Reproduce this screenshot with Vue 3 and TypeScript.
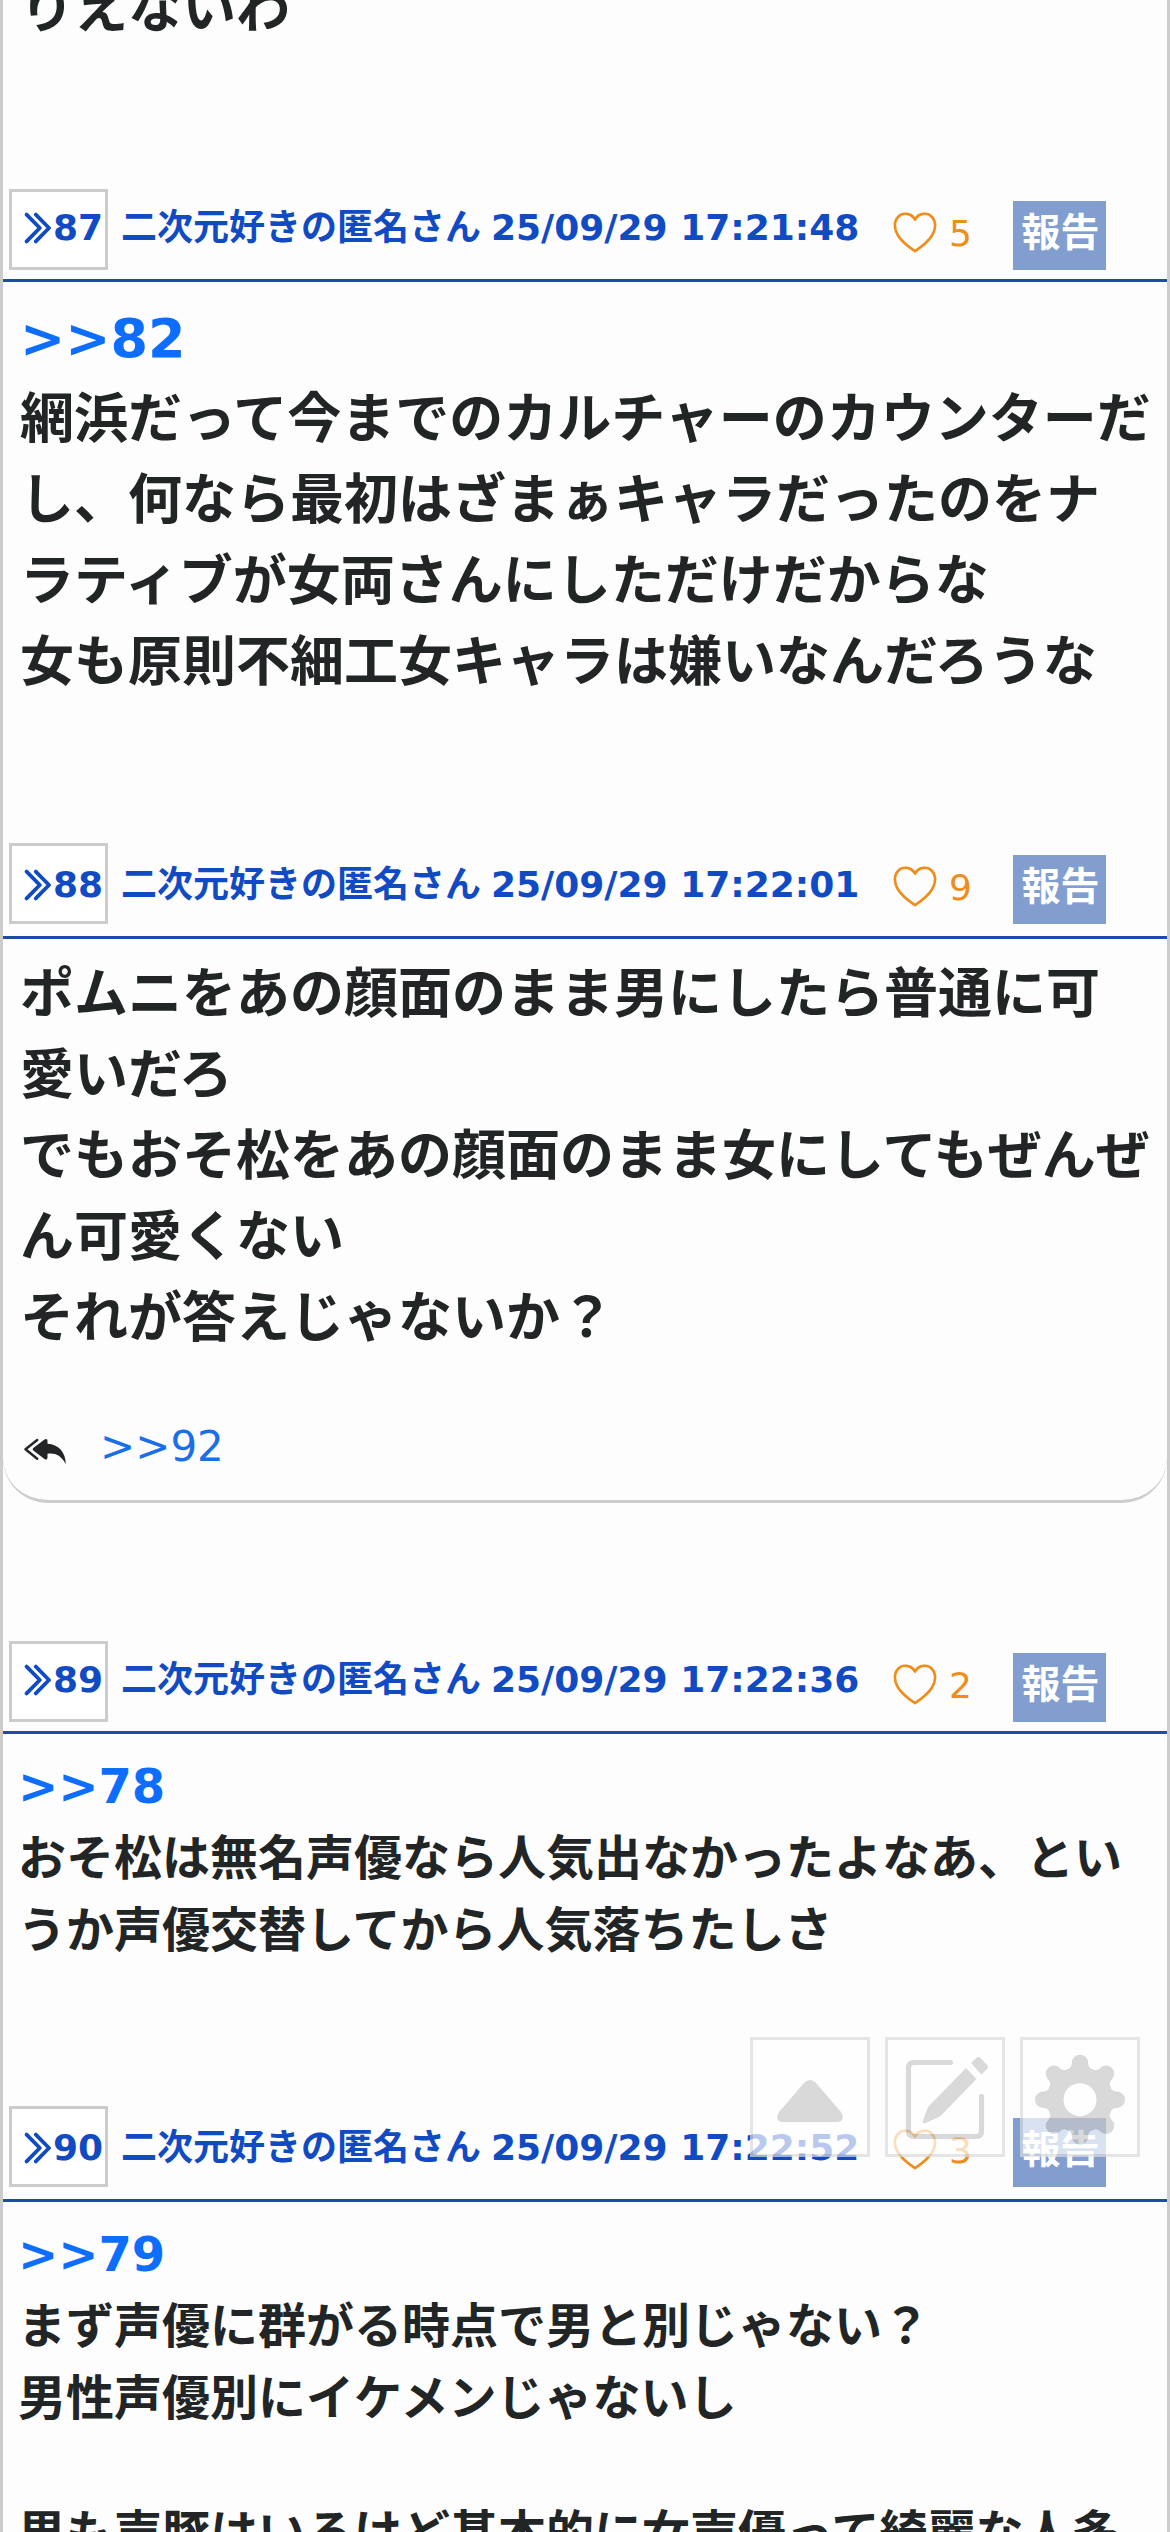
<script setup lang="ts">
interface Post {
  id: number
  time: string
  likes: number
  anchor?: string
  lines: string[]
  size: 'large' | 'medium'
  low: boolean
  replies?: string
}

const posts: Post[] = [
  {
    id: 87,
    time: '25/09/29 17:21:48',
    likes: 5,
    anchor: '>>82',
    lines: [
      '網浜だって今までのカルチャーのカウンターだ',
      'し、何なら最初はざまぁキャラだったのをナ',
      'ラティブが女両さんにしただけだからな',
      '女も原則不細工女キャラは嫌いなんだろうな',
    ],
    size: 'large',
    low: false,
  },
  {
    id: 88,
    time: '25/09/29 17:22:01',
    likes: 9,
    lines: [
      'ポムニをあの顔面のまま男にしたら普通に可',
      '愛いだろ',
      'でもおそ松をあの顔面のまま女にしてもぜんぜ',
      'ん可愛くない',
      'それが答えじゃないか？',
    ],
    size: 'large',
    low: true,
    replies: '>>92',
  },
  {
    id: 89,
    time: '25/09/29 17:22:36',
    likes: 2,
    anchor: '>>78',
    lines: ['おそ松は無名声優なら人気出なかったよなあ、とい', 'うか声優交替してから人気落ちたしさ'],
    size: 'medium',
    low: false,
  },
  {
    id: 90,
    time: '25/09/29 17:22:52',
    likes: 3,
    anchor: '>>79',
    lines: ['まず声優に群がる時点で男と別じゃない？', '男性声優別にイケメンじゃないし', '', '男も声豚はいるけど基本的に女声優って綺麗な人多'],
    size: 'medium',
    low: true,
  },
]
</script>

<template>
  <main class="thread">
    <div class="tail large"><p class="line">りえないわ</p></div>

    <article v-for="post in posts" :key="post.id" class="post" :class="[post.size, { low: post.low, replied: post.replies }]">
      <header class="head">
        <a class="num">
          <svg class="chev" viewBox="0 0 29 32" fill="none" stroke="currentColor" stroke-width="3.8" stroke-linecap="round" stroke-linejoin="round">
            <path d="M2.600 2.600 15.800 16 2.600 29.400M11.800 2.600 25 16 11.800 29.400" />
          </svg>
          <span>{{ post.id }}</span>
        </a>
        <div class="name"><span>二次元好きの匿名さん</span><time>{{ post.time }}</time></div>
        <svg class="heart" viewBox="0 0 44 42" fill="none" stroke="currentColor" stroke-width="2.600" stroke-linejoin="round">
          <path d="M22 7.700C18.500 .8 9.500 .2 5.500 4.500C.5 9.500 1 17 5 23.500C9 30 15 34.500 22 39.200C29 34.500 35 30 39 23.500C43 17 43.500 9.500 38.500 4.500C34.500 .2 25.500 .8 22 7.700Z" />
        </svg>
        <span class="likes">{{ post.likes }}</span>
        <button class="report" type="button">報告</button>
      </header>
      <div class="body">
        <p v-if="post.anchor" class="line"><a class="anchor">{{ post.anchor }}</a></p>
        <p v-for="(text, i) in post.lines" :key="i" class="line" :class="{ blank: !text }">{{ text }}</p>
      </div>
      <footer v-if="post.replies" class="replies">
        <svg class="reply-icon" viewBox="0 0 42 30">
          <path d="M13.200 2 1.500 11.300 13.200 20.800" fill="none" stroke="currentColor" stroke-width="2.400" stroke-linecap="round" stroke-linejoin="round" />
          <path d="M9.300 10Q7.800 11.300 9.300 12.600L20.500 21Q23.500 22.500 23.500 19.500V15.800C31 14.800 36.500 17 41.800 26C41.500 14 34.500 6.500 23.500 5.800V3Q23.500 0 20.500 1.500Z" fill="currentColor" />
        </svg>
        <a>{{ post.replies }}</a>
      </footer>
    </article>

    <nav class="tools">
      <button type="button" class="tool">
        <svg viewBox="0 0 120 120"><path d="M54.500 45.500Q60 40.500 65.500 45.500L91 75Q96 84 87 85H33Q24 84 29 75Z" fill="currentColor" /></svg>
      </button>
      <button type="button" class="tool">
        <svg viewBox="0 0 120 120">
          <path d="M65.500 25.500H29Q23.500 25.500 23.500 31V94Q23.500 99.500 29 99.500H91Q96.500 99.500 96.500 94V59.500" fill="none" stroke="currentColor" stroke-width="5.200" stroke-linecap="round" />
          <path d="M81 31 91.500 42 55 79.500 40.500 86Q37 87 38 83.500L43 70Z" fill="currentColor" />
          <path d="M86 26 91.500 20.800Q93.500 19 95.500 21L102 28Q104 30 102 32L96.500 37.500Z" fill="currentColor" />
        </svg>
      </button>
      <button type="button" class="tool">
        <svg viewBox="0 0 120 120" fill="none" stroke="currentColor">
          <circle cx="60" cy="62.700" r="24.750" stroke-width="16.500" />
          <path v-for="n in 8" :key="n" d="M47.400 32.200C50.500 31.500 51.800 29 51.800 25.900A8.200 8.200 0 0 1 68.200 25.900C68.200 29 69.500 31.500 72.600 32.200L67 43H53Z" fill="currentColor" stroke="none" :transform="`rotate(${n * 45} 60 62.7)`" />
        </svg>
      </button>
    </nav>
  </main>
</template>

<style>
body {
  margin: 0;
  overflow: hidden;
}
</style>

<style scoped>
.thread {
  position: relative;
  box-sizing: border-box;
  width: 1170px;
  height: 2532px;
  overflow: hidden;
  border: solid #ccc;
  border-width: 0 3px;
  background: #fdfdfd;
  color: #222526;
  font-family: "DejaVu Sans", "Noto Sans CJK JP", sans-serif;
}
.tail {
  display: flex;
  height: 189px;
  box-sizing: border-box;
  padding-left: 17px;
}
.tail .line {
  margin-top: -31px;
}
.line {
  margin: 0;
  height: 81px;
  font-size: 54px;
  line-height: 81px;
  font-weight: 700;
  white-space: nowrap;
}
.head {
  display: flex;
  align-items: flex-start;
  box-sizing: border-box;
  height: 93px;
  border-bottom: 3px solid #1b4ca6;
  padding-left: 6px;
  color: #114bc4;
  font-size: 36px;
  line-height: 54px;
  font-weight: 700;
  white-space: nowrap;
}
.low .head {
  height: 96px;
}
.num {
  display: flex;
  box-sizing: border-box;
  width: 99px;
  height: 81px;
  padding: 9px 0 0 12px;
  border: 3px solid #ccc;
  background: #fff;
}
.low .num {
  padding-top: 12px;
}
.chev {
  flex: none;
  width: 29px;
  height: 32px;
  margin-top: 11px;
}
.name {
  display: flex;
  gap: 10px;
  width: 771px;
  margin-left: 13px;
  padding-top: 12px;
}
.low .name {
  padding-top: 15px;
}
.heart {
  flex: none;
  width: 44px;
  height: 42px;
  margin: 23px 0 0 1px;
  color: #ef8d1b;
}
.likes {
  width: 64px;
  margin: 18px 0 0 12px;
  color: #ef8d1b;
  font-weight: 400;
}
.report {
  flex: none;
  width: 93px;
  height: 69px;
  margin-top: 12px;
  padding: 0 0 12px 2px;
  border: 0;
  background: #819ecf;
  color: #fff;
  font: 700 39px/57px "Noto Sans CJK JP", sans-serif;
}
.body {
  padding: 16px 0 140px 17px;
}
.medium .body {
  padding-left: 15px;
}
.medium .line {
  height: 72px;
  font-size: 48px;
  line-height: 72px;
}
.medium .line.blank {
  height: 63px;
}
.anchor {
  color: #0d6efd;
}
.replied {
  box-sizing: border-box;
  height: 798px;
}
.replied .body {
  padding: 15px 0 0 17px;
  height: 405px;
}
.replies {
  display: flex;
  box-sizing: border-box;
  height: 144px;
  padding: 56px 0 0 21px;
  border-bottom: 3px solid #ccc;
  border-radius: 0 0 45px 45px;
  font-size: 42px;
  line-height: 63px;
}
.replies a {
  margin-left: 34px;
  color: #1a6fe8;
}
.reply-icon {
  width: 42px;
  height: 30px;
  margin-top: 23px;
}
.tools {
  position: absolute;
  top: 2037px;
  left: 747px;
  display: flex;
  gap: 15px;
}
.tool {
  box-sizing: border-box;
  width: 120px;
  height: 120px;
  padding: 0;
  border: 3px solid #dcdcdc;
  background: #fff;
  color: #cacaca;
  opacity: 0.7;
}
.tool svg {
  display: block;
  width: 120px;
  height: 120px;
  margin: -3px;
}
</style>
